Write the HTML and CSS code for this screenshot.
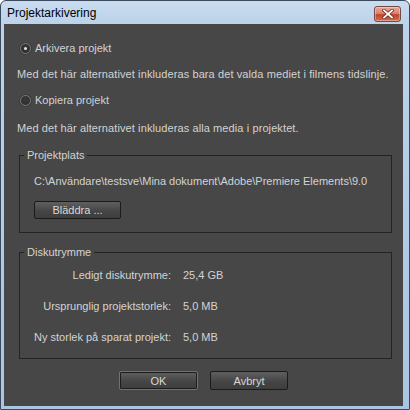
FILE: index.html
```html
<!DOCTYPE html>
<html lang="sv">
<head>
<meta charset="utf-8">
<title>Projektarkivering</title>
<link rel="stylesheet" href="styles.css">
</head>
<body>
<div class="window">
  <div class="titlebar">
    <span class="title">Projektarkivering</span>
    <button class="close" aria-label="Stäng">
      <svg width="12" height="10" viewBox="0 0 12 10">
        <path d="M2 1.5 L10 8.5 M10 1.5 L2 8.5" stroke="#6b2a1e" stroke-width="3.4" stroke-linecap="square" fill="none"/>
        <path d="M2 1.5 L10 8.5 M10 1.5 L2 8.5" stroke="#ffffff" stroke-width="1.8" stroke-linecap="square" fill="none"/>
      </svg>
    </button>
  </div>
  <div class="content">
    <label class="radio-row"><span class="radio checked"></span>Arkivera projekt</label>
    <p class="desc">Med det här alternativet inkluderas bara det valda mediet i filmens tidslinje.</p>
    <label class="radio-row second"><span class="radio"></span>Kopiera projekt</label>
    <p class="desc last">Med det här alternativet inkluderas alla media i projektet.</p>

    <fieldset class="group place">
      <legend>Projektplats</legend>
      <div class="path">C:\Användare\testsve\Mina dokument\Adobe\Premiere Elements\9.0</div>
      <button class="btn browse">Bläddra ...</button>
    </fieldset>

    <fieldset class="group disk">
      <legend>Diskutrymme</legend>
      <div class="stats">
        <span class="k">Ledigt diskutrymme:</span><span class="v">25,4 GB</span>
        <span class="k">Ursprunglig projektstorlek:</span><span class="v">5,0 MB</span>
        <span class="k">Ny storlek på sparat projekt:</span><span class="v">5,0 MB</span>
      </div>
    </fieldset>

    <div class="actions">
      <button class="btn ok">OK</button>
      <button class="btn cancel">Avbryt</button>
    </div>
  </div>
</div>
</body>
</html>
```
FILE: styles.css
```css
* { box-sizing: border-box; }
html, body {
  margin: 0;
  padding: 0;
  width: 410px;
  height: 410px;
  overflow: hidden;
  background: #ffffff;
}
.window {
  width: 410px;
  height: 410px;
  border: 1px solid #3a4a5c;
  border-radius: 6px 6px 0 0;
  background: linear-gradient(#cadcef 0px, #bcd2ea 24px, #a9c5e2 100%);
  display: flex;
  flex-direction: column;
  padding: 0 6px 3px 3px;
}
.titlebar {
  height: 23px;
  flex: none;
  display: flex;
  align-items: center;
  justify-content: space-between;
  padding: 1px 2px 0 3px;
}
.title {
  font: 12px "Liberation Sans", Arial, sans-serif;
  color: #000;
}
.close {
  width: 27px;
  height: 16px;
  padding: 0;
  margin-top: 2px;
  border: 1px solid #6e4b45;
  border-radius: 3px;
  background: linear-gradient(#e9a597 0%, #dc8570 45%, #c4452c 55%, #d46a4e 100%);
  box-shadow: inset 0 0 0 1px rgba(255,255,255,0.35);
  display: flex;
  align-items: center;
  justify-content: center;
}
.content {
  flex: 1;
  background: #474747;
  padding: 15px 0 0 0;
  font: 11px "Liberation Sans", Arial, sans-serif;
  color: #d3d3d3;
  line-height: 18px;
  display: flex;
  flex-direction: column;
}
.radio-row {
  height: 18px;
  display: flex;
  align-items: center;
  gap: 4px;
  margin-left: 16px;
}
.radio-row.second { margin-top: 8px; }
.radio {
  width: 11px;
  height: 11px;
  border-radius: 50%;
  border: 1px solid #7a7a7a;
  background: radial-gradient(circle at 50% 40%, #3a3a3a, #2a2a2a);
  box-shadow: 0 0 0 1px #3c3c3c;
  display: flex;
  align-items: center;
  justify-content: center;
}
.radio.checked::after {
  content: "";
  width: 3px;
  height: 3px;
  border-radius: 50%;
  background: #e4e4e4;
}
.desc {
  margin: 8px 0 0 13px;
  height: 18px;
  white-space: nowrap;
  letter-spacing: 0.1px;
}
.desc.last { margin-top: 10px; }
.group {
  border: 1px solid #232323;
  margin: 11px 11px 0 15px;
  min-width: 0;
}
.group legend {
  padding: 0 3px;
  margin-left: 4px;
  line-height: 14px;
}
.place { padding: 10px 12px 13px 14px; }
.place legend { margin-left: -10px; }
.path { height: 18px; white-space: nowrap; }
.btn {
  font: 11px "Liberation Sans", Arial, sans-serif;
  color: #d8d8d8;
  background: linear-gradient(#5f5f5f, #444444 60%, #3e3e3e);
  border: 1px solid #1b1b1b;
  border-radius: 2px;
  height: 18px;
  padding: 0;
}
.browse {
  margin-top: 11px;
  width: 87px;
  display: block;
}
.disk {
  margin-top: 12px;
  padding: 7px 0 12px 0;
}
.stats {
  display: grid;
  grid-template-columns: 151px auto;
  column-gap: 12px;
  row-gap: 13px;
}
.stats span { height: 18px; white-space: nowrap; }
.stats .k { text-align: right; }
.actions {
  margin-top: 12px;
  display: flex;
  justify-content: center;
  gap: 12px;
}
.actions .btn { height: 19px; }
.ok {
  width: 79px;
  border-color: #5576a8;
  box-shadow: inset 0 0 0 1px #1d1d1d;
}
.cancel { width: 78px; }
```
